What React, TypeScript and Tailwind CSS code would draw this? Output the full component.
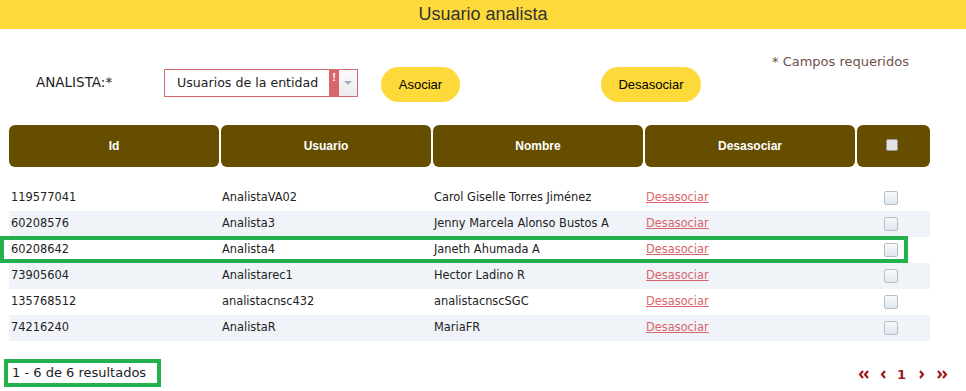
import React from "react";

type Row = { id: string; usuario: string; nombre: string };

const rows: Row[] = [
  { id: "119577041", usuario: "AnalistaVA02", nombre: "Carol Giselle Torres Jiménez" },
  { id: "60208576", usuario: "Analista3", nombre: "Jenny Marcela Alonso Bustos A" },
  { id: "60208642", usuario: "Analista4", nombre: "Janeth Ahumada A" },
  { id: "73905604", usuario: "Analistarec1", nombre: "Hector Ladino R" },
  { id: "135768512", usuario: "analistacnsc432", nombre: "analistacnscSGC" },
  { id: "74216240", usuario: "AnalistaR", nombre: "MariaFR" },
];

const headers = ["Id", "Usuario", "Nombre", "Desasociar"];

function Chevron({ dir, double }: { dir: "left" | "right"; double?: boolean }) {
  const one = dir === "left" ? "M5 1 L2 4.5 L5 8" : "M2 1 L5 4.5 L2 8";
  const two = dir === "left" ? "M10 1 L7 4.5 L10 8" : "M7 1 L10 4.5 L7 8";
  return (
    <svg width={double ? 12 : 7} height="9" viewBox={double ? "0 0 12 9" : "0 0 7 9"} fill="none">
      <path d={one} stroke="#a11a1a" strokeWidth="2.2" strokeLinejoin="miter" />
      {double && <path d={two} stroke="#a11a1a" strokeWidth="2.2" strokeLinejoin="miter" />}
    </svg>
  );
}

function Checkbox() {
  return (
    <div className="w-[14px] h-[14px] rounded-[2px] border border-[#b9bec4] bg-gradient-to-b from-[#f7f9fb] to-[#dfe7ef]" />
  );
}

export default function App() {
  return (
    <div className="relative w-[966px] h-[391px] bg-white overflow-hidden font-['DejaVu_Sans',sans-serif] text-[#222]">
      {/* título */}
      <div className="h-[29px] bg-[#fed93a] flex items-center justify-center">
        <span className="font-['Liberation_Sans',sans-serif] text-[18px] text-[#333]">Usuario analista</span>
      </div>

      {/* formulario */}
      <div className="flex items-start mt-[38px] h-[35px]">
        <span className="ml-[36px] w-[128px] mt-[7px] text-[13.5px] leading-[16px]">ANALISTA:*</span>
        <div className="mt-[2px] w-[194px] h-[28px] border border-[#d46a6a] flex">
          <span className="flex-1 pl-[12px] text-[12.6px] leading-[26px] text-[#222]">Usuarios de la entidad</span>
          <div className="w-[10px] bg-[#d8666b] flex justify-center">
            <span className="text-white font-bold text-[11px] leading-[14px] font-['Liberation_Sans',sans-serif]">!</span>
          </div>
          <div className="w-[18px] bg-gradient-to-b from-[#fafafa] to-[#ececec] flex items-center justify-center">
            <div className="w-0 h-0 border-l-[4px] border-r-[4px] border-t-[4px] border-l-transparent border-r-transparent border-t-[#9fb0c6]" />
          </div>
        </div>
        <button className="ml-[23px] w-[79px] h-[35px] rounded-full bg-[#fed93a] font-['Liberation_Sans',sans-serif] text-[13px] text-black">
          Asociar
        </button>
        <button className="ml-[141px] w-[100px] h-[35px] rounded-full bg-[#fed93a] font-['Liberation_Sans',sans-serif] text-[13px] text-black">
          Desasociar
        </button>
        <span className="ml-[71px] -mt-[13px] text-[13px] leading-[16px] text-[#6e5148]">* Campos requeridos</span>
      </div>

      {/* tabla */}
      <div className="ml-[9px] w-[921px] mt-[23px]">
        <div className="grid grid-cols-[210px_210px_210px_210px_73px] gap-x-[2px] h-[42px]">
          {headers.map((h) => (
            <div
              key={h}
              className="bg-[#654e00] rounded-[6px] flex items-center justify-center text-white font-bold font-['Liberation_Sans',sans-serif] text-[12px]"
            >
              {h}
            </div>
          ))}
          <div className="bg-[#654e00] rounded-[6px] flex justify-center pt-[14px] pr-[4px]">
            <div className="w-[12px] h-[12px] rounded-[2px] border border-[#9a9a9a] bg-[#e2e2e2]" />
          </div>
        </div>

        <div className="mt-[18px]">
          {rows.map((r, i) => (
            <div
              key={r.id}
              className={`grid grid-cols-[210px_210px_210px_210px_73px] gap-x-[2px] h-[26px] items-center text-[11.4px] ${
                i % 2 === 1 ? "bg-[#f0f4f9]" : "bg-white"
              }`}
            >
              <span className="pl-[2px]">{r.id}</span>
              <span className="pl-[1px]">{r.usuario}</span>
              <span className="pl-[1px]">{r.nombre}</span>
              <span className="pl-[1px]">
                <a className="text-[#d9646a] underline cursor-pointer">Desasociar</a>
              </span>
              <div className="flex justify-center pr-[5px]">
                <Checkbox />
              </div>
            </div>
          ))}
        </div>
      </div>

      {/* pie */}
      <div className="flex items-center justify-between h-[28px] mt-[18px]">
        <span className="pl-[12px] text-[13px]">1 - 6 de 6 resultados</span>
        <div className="flex items-center pr-[18px] pt-[2px]">
          <Chevron dir="left" double />
          <span className="ml-[10px]"><Chevron dir="left" /></span>
          <span className="ml-[10px] text-[13px] font-bold text-[#9c1a1a] leading-none">1</span>
          <span className="ml-[12px]"><Chevron dir="right" /></span>
          <span className="ml-[11px]"><Chevron dir="right" double /></span>
        </div>
      </div>

      {/* marcas verdes */}
      <div className="absolute left-0 top-[236px] w-[908px] h-[27px] border-[4px] border-[#22b14c] pointer-events-none" />
      <div className="absolute left-[4px] top-[359px] w-[157px] h-[28px] border-[4px] border-[#22b14c] pointer-events-none" />
    </div>
  );
}
